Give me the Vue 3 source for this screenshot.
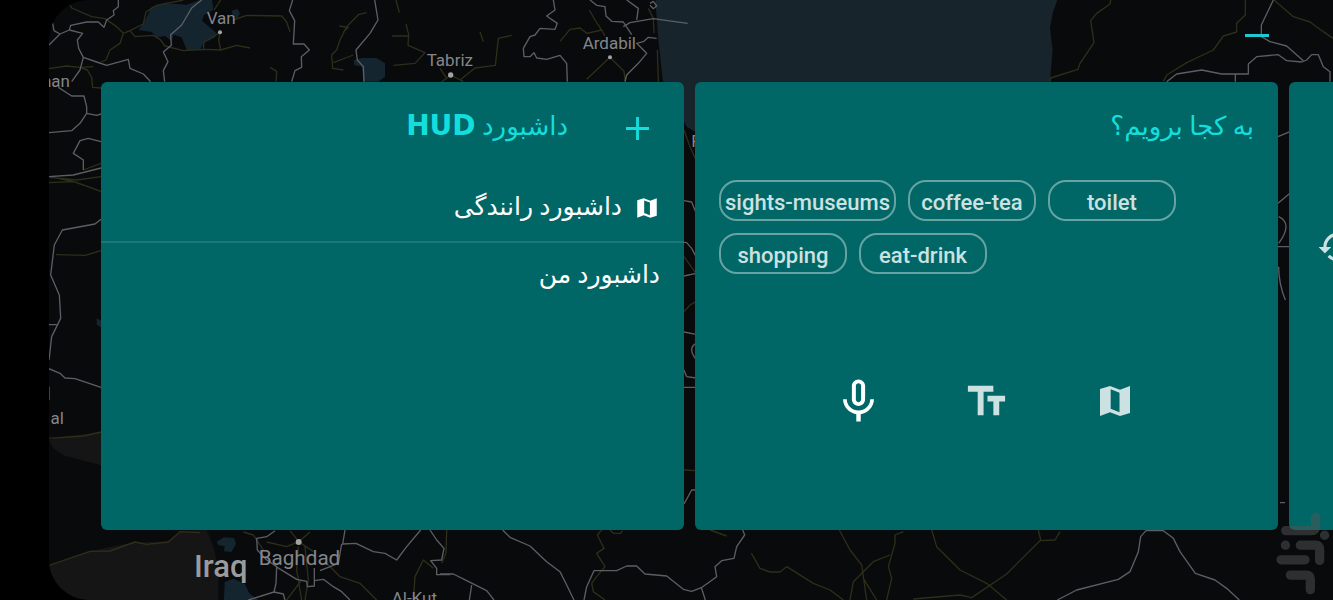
<!-- Car launcher home: dashboard cards over a dark map -->
<template>
  <div class="screen">
    <main class="stage">
      <svg class="backdrop" viewBox="147 0 3852 1800" preserveAspectRatio="xMinYMin slice" aria-hidden="true">
        <!-- water and desert -->
        <g class="sea">
          <path d="M1966 0H3172L3158 40 3150 85 3158 150 3150 245 3150 400H2092L2060 380 1988 240 1975 120Z" />
        </g>
        <g class="lake">
          <path d="M455 20 500 10 560 14 600 0H636L640 30 612 45 606 62 648 98 646 112 610 130 600 150H560L545 112 520 104 515 124 495 108 470 112 455 96 415 90 432 68Z" />
          <path d="M695 32 712 26 720 40 712 55 698 50Z" />
          <path d="M1062 180 1085 174H1130L1155 190V230L1135 245H1090L1086 200 1062 195Z" />
          <path d="M290 955 303 962V982L290 974Z" />
          <path d="M650 1625 672 1612 702 1614 708 1632 694 1656 672 1654 674 1638 655 1636Z" />
          <path d="M674 1746 700 1736 735 1752 748 1780 775 1800H672Z" />
        </g>
        <path class="desert" d="M147 1695 270 1654 400 1627 500 1625 545 1594 620 1590 640 1640 655 1700 655 1800H240Q150 1760 147 1695Z" />
        <path class="desert" d="M147 1320 200 1308 303 1298V1396L190 1366 160 1345Z" />

        <!-- secondary roads -->
        <g class="minor">
          <path d="M206 8 215 24 275 50 315 56 350 80 370 100 360 130 330 150 318 180 302 186" />
          <path d="M370 100 390 92 405 110 460 106 480 118 495 138 550 152 620 148 662 150 710 136 750 144" />
          <path d="M390 92 430 72 438 36 470 16 550 0M662 0 642 30M660 98 612 126 610 148M660 98 656 120 662 150" />
          <path d="M700 60 740 46 845 48 860 66 870 95M147 206 200 198 240 202 280 200M245 204 262 210 275 232 278 262 303 264" />
          <path d="M1100 38 1075 44 1040 80 1020 120 1010 150 995 165 998 205 1030 210M1000 188 1060 165M1018 78 1045 82 1030 96" />
          <path d="M1188 0 1198 38M1218 72 1226 104 1224 136 1275 158 1245 190 1180 196M1176 108H1224M810 202 830 214 828 245" />
          <path d="M1440 96 1450 125M1535 106 1495 115 1486 196 1425 204 1380 240M1320 205 1340 235M1352 225 1320 250M1352 225 1390 245" />
          <path d="M1680 124 1710 88 1740 84 1760 100 1805 90 1815 108M1768 30 1785 60 1805 90M1830 172 1760 238M1830 172 1872 214 1876 245M1945 25 1960 55 1962 100M1972 150 1975 245" />
          <path d="M3332 0 3330 12 3290 40 3272 62 3282 128 3240 190 3234 208 3152 234 3150 245" />
          <path d="M3736 0V45L3710 70V96L3670 108 3640 150 3560 188 3500 225 3490 245M3822 0 3880 50 3930 66 3970 95 3999 115" />
          <path d="M150 530 225 546 303 574M147 548 220 545M303 530 230 540 150 532M250 510 303 490M168 764 255 766 303 752M147 1315 250 1308 303 1296" />
          <path d="M147 1696 270 1654 330 1653 405 1626 440 1633 505 1626 540 1595 600 1598" />
          <path d="M730 1596 760 1605 790 1650M896 1625 860 1640 800 1626M896 1625 870 1592M896 1625 930 1596M896 1625 940 1655M895 1640 890 1710 905 1800M905 1740 860 1800M915 1640 925 1740 915 1800" />
          <path d="M980 1690 1020 1730 1080 1750 1130 1800M1240 1800 1245 1730 1270 1680 1300 1705M1340 1590 1338 1660 1325 1690" />
          <path d="M1805 1590 1792 1605 1812 1645 1790 1660 1815 1700 1790 1730 1775 1750 1780 1775 1815 1800M1830 1590 1840 1600H1862L1868 1592M2130 1590 2180 1608" />
          <path d="M2254 1660 2280 1705 2310 1716 2340 1716 2360 1700 2440 1750 2490 1770 2530 1800M2518 1590 2550 1650 2585 1695 2600 1800M2670 1665 2620 1685 2560 1745 2550 1800M2590 1735 2630 1800" />
          <path d="M2710 1595 2685 1605 2685 1630 2665 1700 2675 1735 2660 1800M2795 1590 2810 1640 2880 1710 2960 1750 3020 1800M3180 1595 3165 1620 3120 1622 3020 1722 2915 1793 2880 1785 2740 1797M3115 1590 3122 1620" />
          <path d="M2052 390 2070 440 2088 480M2052 770 2088 820M2052 935 2070 915 2088 905M2052 1410 2088 1412" />
        </g>

        <!-- main roads -->
        <g class="major">
          <path d="M355 0 355 20 340 32 342 45 320 60 312 82 295 66 260 66 212 76 208 90 180 102 147 135M155 55 162 92 180 102" />
          <path d="M208 90 248 100 232 120 236 145 250 172 240 210 215 245M250 172 290 186 320 196 385 178 390 205 430 222 452 245" />
          <path d="M605 0 575 24 545 75 512 104 514 136 490 156 504 185 490 212 494 245" />
          <path d="M878 0 868 32 884 62 880 132 912 132 928 150 904 170 905 202 885 212 875 245" />
          <path d="M1124 0 1134 60 1110 100 1068 150 1072 180 1090 200 1092 245" />
          <path d="M1660 0 1665 30 1640 48 1672 70 1665 88 1620 85 1605 105 1590 110 1570 145 1572 170 1590 170 1602 158 1610 174 1640 178 1680 166 1700 190 1702 245" />
          <path d="M1770 0 1790 16 1815 20 1818 48 1835 64 1870 66 1895 104M1880 0 1915 25 1910 60M1870 80 1890 68 1960 56 2063 70M1950 10 1960 4 1970 18 1960 26 1950 16M1970 115 1945 112 1930 125 1910 130 1940 160 1915 190 1880 225 1875 245" />
          <path d="M3820 0 3784 75V110L3810 125 3860 138 3910 182M3500 245 3530 222 3605 210 3665 222 3745 222 3745 192 3770 170 3835 164 3860 182 3905 186 3920 180 3935 164H3955L3970 200 3990 215V245M3706 222V245" />
          <path d="M175 262 215 288 252 288 260 320 260 340 240 370 215 392 147 398M260 340 290 346 303 342M303 425 265 415 240 422 220 460 250 480 250 510M147 530 220 525 303 504" />
          <path d="M303 658 285 672 187 690 163 735 152 825 178 885 182 955 155 1010 147 1080M147 974H170M147 1106 180 1120 195 1134 225 1136 303 1162M147 1160V1200" />
          <path d="M825 1592 800 1610 770 1615 772 1650 800 1680 830 1700 828 1750 822 1776 745 1800M828 1700 890 1738 920 1744 922 1760 943 1758 943 1704M943 1742 970 1738 1000 1760 1025 1775 1050 1800M822 1776 850 1782 855 1800" />
          <path d="M1035 1590 1028 1632 1068 1630 1120 1655 1155 1660 1190 1680 1220 1640 1262 1590M1025 1632 1015 1690 960 1712M1290 1590 1310 1620 1332 1645 1325 1680 1292 1682 1310 1705 1310 1724 1350 1724" />
          <path d="M1320 1722 1360 1722 1400 1742 1460 1772 1482 1800M1415 1755 1408 1800M1508 1590 1530 1612 1590 1638 1640 1685 1680 1715 1700 1755 1722 1800" />
          <path d="M1752 1800 1760 1760 1782 1712H1850L1880 1698H1910L1935 1722 2000 1728 2050 1768 2075 1774 2104 1763 2150 1730 2145 1700 2165 1682 2202 1675 2210 1640 2234 1605 2228 1590M2104 1763 2116 1800" />
          <path d="M3172 1800 3230 1770 3355 1738 3390 1715 3415 1655 3422 1610 3438 1592H3490L3520 1615 3540 1655 3586 1720 3645 1740 3680 1765 3718 1800" />
          <path d="M2052 602 2075 606 2088 638M2028 725 2060 728 2075 745 2088 770M2052 828 2088 820M2052 996 2088 1003M2088 1030Q2062 1045 2088 1078M2052 1110 2060 1130 2088 1134M2052 1162H2088M2052 1512 2075 1470H2088" />
          <path d="M3834 410 3870 395M3834 610 3870 580M3836 650Q3880 670 3836 730M3834 740H3870M3836 800Q3836 850 3856 900M3840 1508H3855" />
        </g>

        <g class="town">
          <circle cx="660" cy="97" r="6" />
          <circle cx="1352" cy="225" r="8" />
          <circle cx="1830" cy="172" r="6" />
          <circle cx="896" cy="1626" r="9" />
        </g>
        <g class="label">
          <text x="620" y="72">Van</text>
          <text x="1280" y="197">Tabriz</text>
          <text x="1748" y="148">Ardabil</text>
          <text x="210" y="260" text-anchor="end">nan</text>
          <text x="192" y="1272" text-anchor="end">al</text>
          <text x="2074" y="440">R</text>
          <text x="1175" y="1812">Al-Kut</text>
          <text class="city" x="776" y="1696">Baghdad</text>
          <text class="country" x="582" y="1731">Iraq</text>
        </g>
      </svg>

      <header class="topbar">
        <button class="minimize" type="button" aria-label="کوچک کردن"></button>
      </header>

      <div class="cards">
        <section class="card" dir="rtl">
          <div class="card-head">
            <button class="add" type="button" aria-label="افزودن">
              <svg viewBox="0 0 24 24"><path d="M10.500 0h3v10.500H24v3H13.500V24h-3V13.500H0v-3h10.500z" /></svg>
            </button>
            <h2>داشبورد <span class="hud">HUD</span></h2>
          </div>
          <ul class="rows">
            <li v-for="d in dashboards" :key="d.name">
              <button class="row" type="button">
                <svg v-if="d.icon" class="row-icon" viewBox="0 0 24 24"><path :d="icons[d.icon]" /></svg>
                <span class="row-name">{{ d.name }}</span>
              </button>
            </li>
          </ul>
        </section>

        <section class="card">
          <div class="card-head" dir="rtl">
            <h2>به کجا برویم؟</h2>
          </div>
          <div class="chips">
            <button v-for="place in places" :key="place" class="chip" type="button">{{ place }}</button>
          </div>
          <div class="actions">
            <button
              v-for="a in actions"
              :key="a.icon"
              class="action"
              :class="'action-' + a.icon"
              type="button"
              :aria-label="a.label"
            >
              <svg viewBox="0 0 24 24"><path :d="icons[a.icon]" /></svg>
            </button>
          </div>
        </section>

        <section class="card recent">
          <button class="history" type="button" aria-label="تاریخچه">
            <svg viewBox="0 0 24 24"><path :d="icons.history" /></svg>
          </button>
        </section>
      </div>

      <svg class="mark" viewBox="1184 36 165 250" aria-hidden="true">
        <g>
          <path d="M1306 52V80q0 12-12 12H1216" />
          <path d="M1260 136H1306q12 0 12 12V182" />
          <path d="M1202 180H1274" />
          <path d="M1230 226H1278q12 0 12 12V270" />
          <path d="M1333 106h.1M1215 136h.1" />
        </g>
      </svg>
    </main>
  </div>
</template>

<script setup>
import { ref } from "vue";

// 24x24 icon shapes
const icons = {
  map: "M3 4.800 9 3l6 2.300L21 3v16.200L15 21l-6-2.200L3 21zM9.400 5v11.700l5.300 2V7z",
  text: "M2.5 4v3h5v12h3V7h5V4h-13zm19 5h-9v3h3v7h3v-7h3V9z",
  mic: "M12 14c1.66 0 2.99-1.34 2.99-3L15 5c0-1.66-1.34-3-3-3S9 3.340 9 5v6c0 1.66 1.34 3 3 3zm-1.200-9.100c0-.66.54-1.200 1.200-1.200.66 0 1.200.54 1.200 1.200l-.01 6.200c0 .66-.53 1.200-1.190 1.200-.66 0-1.200-.54-1.200-1.200V4.900zm6.500 6.100c0 3-2.540 5.100-5.300 5.100S6.700 14 6.700 11H5c0 3.410 2.720 6.230 6 6.720V21h2v-3.280c3.280-.48 6-3.300 6-6.720h-1.700z",
  history:
    "M13 3a9 9 0 0 0-9 9H1l3.890 3.890.07.14L9 12H6c0-3.870 3.130-7 7-7s7 3.130 7 7-3.130 7-7 7c-1.930 0-3.680-.79-4.940-2.060l-1.420 1.420A8.954 8.954 0 0 0 13 21a9 9 0 0 0 0-18z",
};

const dashboards = ref([
  { name: "داشبورد رانندگی", icon: "map" },
  { name: "داشبورد من" },
]);

const places = ref(["sights-museums", "coffee-tea", "toilet", "shopping", "eat-drink"]);

const actions = [
  { icon: "mic", label: "جستجوی صوتی" },
  { icon: "text", label: "جستجوی متنی" },
  { icon: "map", label: "نقشه" },
];
</script>

<style>
body {
  margin: 0;
  background: #000;
}
</style>

<style scoped>
.screen {
  min-height: 100vh;
  padding-left: 49px;
  box-sizing: border-box;
  background: #000;
  font-family: Roboto, "DejaVu Sans", sans-serif;
}
.stage {
  position: relative;
  display: flex;
  flex-direction: column;
  min-height: 100vh;
  padding-bottom: 70px;
  box-sizing: border-box;
  overflow: hidden;
  border-radius: 40px 0 0 40px;
  background: #080a0c;
}
button {
  padding: 0;
  border: none;
  background: none;
  color: inherit;
  font: inherit;
  cursor: pointer;
}
svg {
  display: block;
  fill: currentColor;
}

/* map */
.backdrop {
  position: absolute;
  inset: 0;
  width: 100%;
  height: 100%;
}
.sea {
  fill: #17242c;
}
.lake {
  fill: #142530;
}
.desert {
  fill: #151515;
}
.minor,
.major {
  fill: none;
  stroke-width: 4;
  stroke-linejoin: round;
}
.minor {
  stroke: #2f2e1b;
}
.major {
  stroke: #5d5e65;
}
.town {
  fill: #a3a3a3;
}
.label {
  fill: #85868a;
  font-size: 51px;
}
.city {
  font-size: 62px;
}
.country {
  fill: #9a9b9f;
  font-size: 93px;
  font-weight: 500;
}

/* layout */
.topbar {
  position: relative;
  display: flex;
  justify-content: flex-end;
  height: 82px;
  padding: 23px 64px 0 0;
  box-sizing: border-box;
}
.minimize {
  display: flex;
  align-items: center;
  width: 24px;
  height: 24px;
}
.minimize::before {
  content: "";
  width: 100%;
  height: 3px;
  background: #1fc8d2;
}
.cards {
  position: relative;
  display: flex;
  flex: 1;
  gap: 11px;
  padding-left: 52px;
}
.card {
  display: flex;
  flex: 0 0 calc(50% - 33px);
  flex-direction: column;
  border-radius: 6px;
  background: #006766;
  color: #fff;
}
.card-head {
  display: flex;
  align-items: center;
  height: 93px;
  padding: 0 24px;
  color: #14dedd;
}
h2 {
  margin: 0 0 6px;
  font-size: 26px;
  font-weight: 400;
  line-height: 32px;
}
.add {
  margin: 0 11px 0 58px;
}
.add svg {
  width: 23px;
  height: 23px;
}
.hud {
  font-family: "DejaVu Sans", sans-serif;
  font-size: 28px;
  font-weight: 700;
}
.rows {
  margin: 0;
  padding: 0;
  list-style: none;
}
.rows li + li {
  border-top: 2px solid #1f7877;
}
.row {
  display: flex;
  align-items: center;
  gap: 12px;
  width: 100%;
  height: 66px;
  padding: 0 24px;
  font-size: 25px;
}
.row-icon {
  width: 26px;
  height: 26px;
}
.row-name {
  padding-bottom: 4px;
}
.chips {
  display: flex;
  flex-wrap: wrap;
  gap: 12px;
  padding: 5px 24px 0;
}
.chip {
  min-width: 128px;
  height: 41px;
  padding: 3px 4px 0;
  border: 2px solid #66a3a3;
  border-radius: 18px;
  color: #cce1e1;
  font-size: 22px;
  font-weight: 500;
}
.actions {
  display: flex;
  justify-content: center;
  margin: auto 0 97px;
}
.action {
  display: flex;
  align-items: center;
  justify-content: center;
  width: 128px;
  height: 64px;
  color: #cce1e1;
}
.action svg {
  width: 40px;
}
.action-mic {
  color: #fff;
}
.action-mic svg {
  width: 53px;
}
.action-text svg {
  width: 47px;
}
.recent {
  padding: 146px 28px 0;
  box-sizing: border-box;
  color: #cce1e1;
}
.history svg {
  width: 38px;
}

/* store mark over the corner */
.mark {
  position: absolute;
  right: 3px;
  bottom: 5px;
  width: 55px;
  height: 83px;
  fill: none;
  stroke: #555;
  stroke-width: 28;
  stroke-linecap: round;
  opacity: 0.5;
}
</style>
